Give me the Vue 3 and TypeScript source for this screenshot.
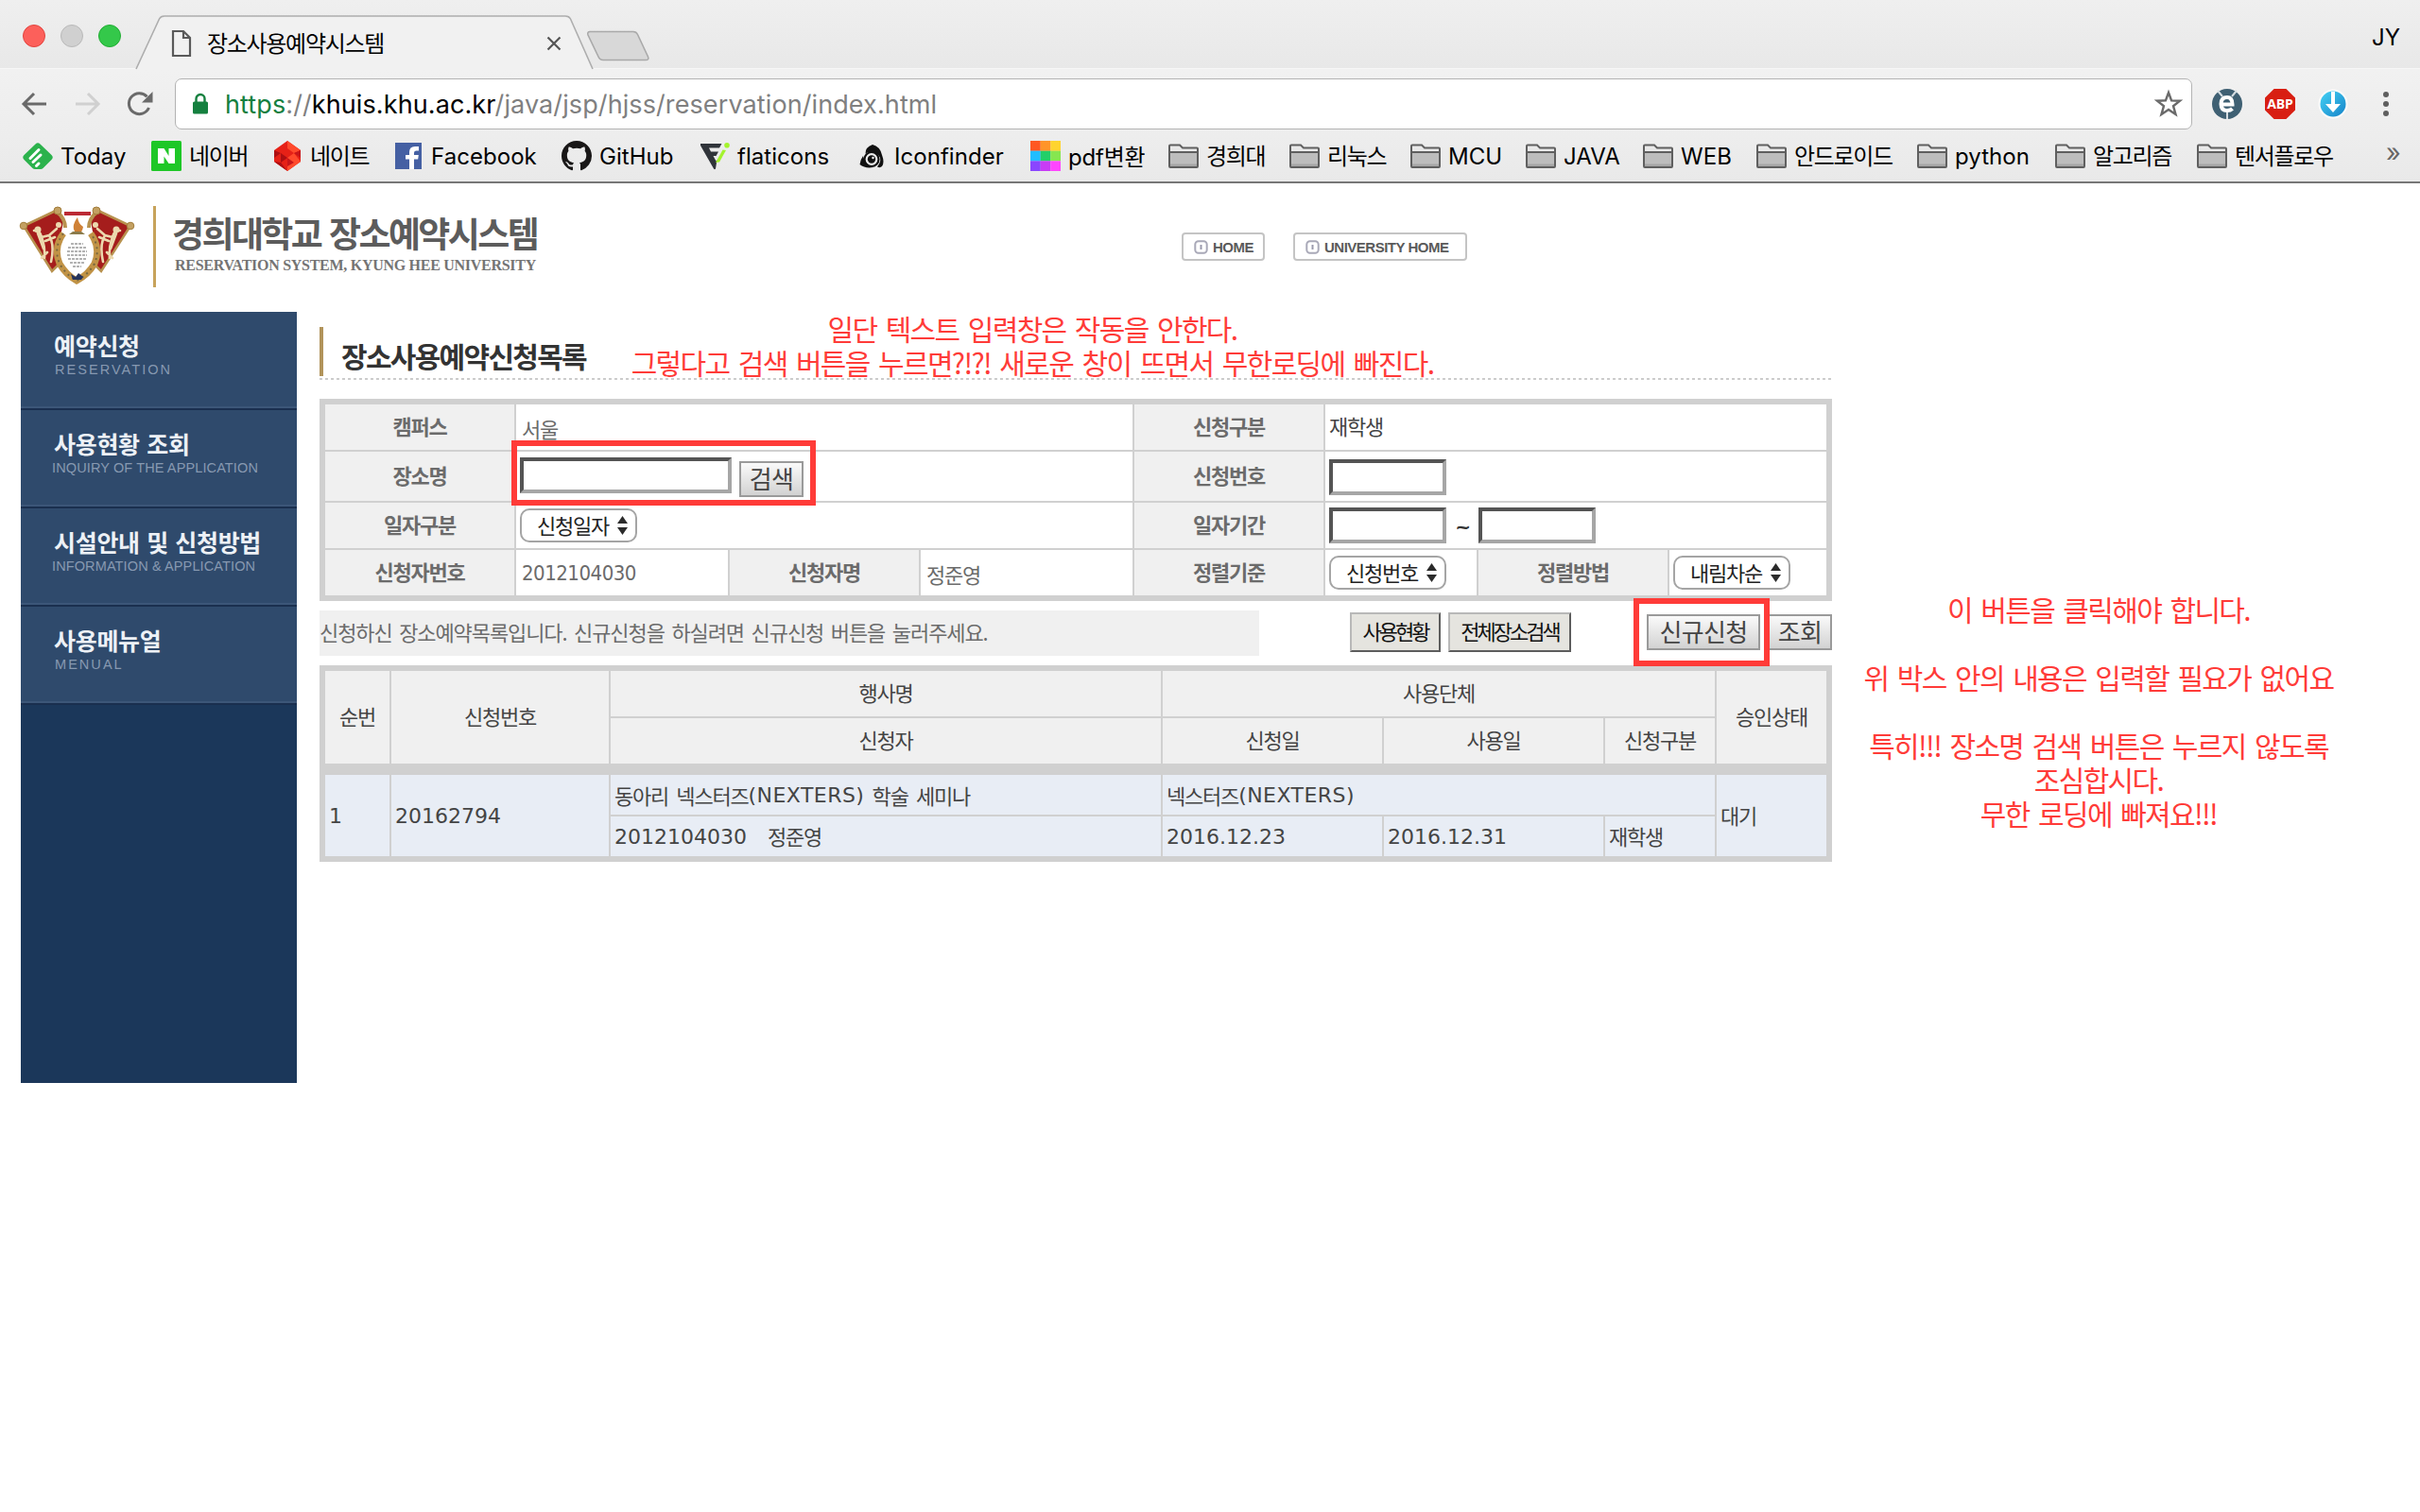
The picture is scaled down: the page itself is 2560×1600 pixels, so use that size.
<script setup lang="ts">
interface Bookmark {
  label: string
  icon: string
  width: number
  script: 'ko' | 'en' | 'mix'
}

const bookmarks: Bookmark[] = [
  { label: 'Today', icon: 'feedly', width: 136, script: 'en' },
  { label: '네이버', icon: 'naver', width: 128, script: 'ko' },
  { label: '네이트', icon: 'nate', width: 128, script: 'ko' },
  { label: 'Facebook', icon: 'facebook', width: 178, script: 'en' },
  { label: 'GitHub', icon: 'github', width: 146, script: 'en' },
  { label: 'flaticons', icon: 'flaticon', width: 166, script: 'en' },
  { label: 'Iconfinder', icon: 'iconfinder', width: 184, script: 'en' },
  { label: 'pdf변환', icon: 'pdf', width: 146, script: 'mix' },
  { label: '경희대', icon: 'folder', width: 128, script: 'ko' },
  { label: '리눅스', icon: 'folder', width: 128, script: 'ko' },
  { label: 'MCU', icon: 'folder', width: 122, script: 'en' },
  { label: 'JAVA', icon: 'folder', width: 124, script: 'en' },
  { label: 'WEB', icon: 'folder', width: 120, script: 'en' },
  { label: '안드로이드', icon: 'folder', width: 170, script: 'ko' },
  { label: 'python', icon: 'folder', width: 146, script: 'en' },
  { label: '알고리즘', icon: 'folder', width: 150, script: 'ko' },
  { label: '텐서플로우', icon: 'folder', width: 150, script: 'ko' },
]

const pdfColors: string[] = [
  '#ff5722', '#ff9429', '#ffd42e',
  '#22bdff', '#22cf68', '#86e650',
  '#8a46ff', '#c83cf5', '#ff46ff',
]

const menu = [
  { ko: '예약신청', en: 'RESERVATION', kind: 'wide' },
  { ko: '사용현황 조회', en: 'INQUIRY OF THE APPLICATION', kind: 'tight' },
  { ko: '시설안내 및 신청방법', en: 'INFORMATION & APPLICATION', kind: 'tight' },
  { ko: '사용메뉴얼', en: 'MENUAL', kind: 'wide' },
]
</script>

<template>
  <div class="screen">
    <header class="chrome">
      <div class="tabstrip">
        <div class="lights">
          <i class="light red"></i><i class="light grey"></i><i class="light green"></i>
        </div>
        <div class="tab">
          <svg class="tab-shape" width="486" height="58" viewBox="0 0 486 58">
            <path d="M0 57.5 L1 57 L25.500 4 Q27 1 31 1 H455 Q459 1 460.500 4 L484 57 L486 57.500 Z" fill="#f1f1f1" />
            <path d="M1 57 L25.500 4 Q27 1 31 1 H455 Q459 1 460.500 4 L484 57" fill="none" stroke="#adadad" stroke-width="1.6" />
          </svg>
          <div class="tab-content">
            <svg width="22" height="30" viewBox="0 0 22 30">
              <path d="M2 2 H13 L20 9 V28 H2 Z M13 2 V9 H20" fill="none" stroke="#5a5a5a" stroke-width="2.2" />
            </svg>
            <span class="tab-title">장소사용예약시스템</span>
            <svg class="tab-close" width="16" height="16" viewBox="0 0 16 16">
              <path d="M1.500 1.500 L14.500 14.500 M14.500 1.500 L1.500 14.500" stroke="#555" stroke-width="2.2" />
            </svg>
          </div>
        </div>
        <svg class="new-tab" width="68" height="34" viewBox="0 0 68 34">
          <path d="M4 1.500 H50 Q53 1.500 54.500 4.500 L65.500 28 Q67 31.500 63 31.500 H18 Q14.500 31.500 13 28 L2 5 Q1 1.500 4 1.500 Z" fill="#d8d8d8" stroke="#a9a9a9" stroke-width="1.6" />
        </svg>
        <span class="profile">JY</span>
      </div>

      <div class="toolbar">
        <svg class="nav" width="30" height="28" viewBox="0 0 30 28">
          <path d="M28 14 H4 M15 3 L4 14 L15 25" fill="none" stroke="#6a6a6a" stroke-width="3" />
        </svg>
        <svg class="nav fwd" width="30" height="28" viewBox="0 0 30 28">
          <path d="M2 14 H26 M15 3 L26 14 L15 25" fill="none" stroke="#d0d0d0" stroke-width="3" />
        </svg>
        <svg class="nav reload" width="30" height="28" viewBox="0 0 30 28">
          <path d="M24.500 18 A11 11 0 1 1 22.500 6.200" fill="none" stroke="#6a6a6a" stroke-width="3" />
          <path d="M28.500 1 V12.500 H17 Z" fill="#6a6a6a" />
        </svg>
        <div class="omnibox">
          <svg width="18" height="24" viewBox="0 0 18 24">
            <path d="M4.500 11 V6.500 A4.500 4.500 0 0 1 13.500 6.500 V11" fill="none" stroke="#15803f" stroke-width="2.4" />
            <rect x="1" y="9.500" width="16" height="13" rx="1.500" fill="#15803f" />
          </svg>
          <span class="url"><b>https</b>://<em>khuis.khu.ac.kr</em>/java/jsp/hjss/reservation/index.html</span>
          <svg class="star" width="32" height="32" viewBox="0 0 32 32">
            <path d="M16 4 L19.100 12.400 L28 12.700 L21 18.200 L23.500 27 L16 21.900 L8.500 27 L11 18.200 L4 12.700 L12.900 12.400 Z" fill="none" stroke="#6a6a6a" stroke-width="2.4" />
          </svg>
        </div>
        <svg class="ext" width="32" height="32" viewBox="0 0 32 32">
          <circle cx="16" cy="16" r="16" fill="#3f6073" />
          <path d="M6 2 L11 8 M26 2 L21 8 M16 25 V32" stroke="#d5dde2" stroke-width="2" />
          <path d="M10 16.500 H21.500 Q21.500 9 16 9 Q9.500 9 9.500 16 Q9.500 23 16 23 Q19.500 23 21.500 21" fill="none" stroke="#fff" stroke-width="4" />
        </svg>
        <div class="ext abp"><span>ABP</span></div>
        <svg class="ext" width="32" height="32" viewBox="0 0 32 32">
          <defs>
            <linearGradient id="dl" x1="0" y1="0" x2="1" y2="1">
              <stop offset="0" stop-color="#45d2f5" /><stop offset="1" stop-color="#1583c8" />
            </linearGradient>
          </defs>
          <circle cx="16" cy="16" r="15.500" fill="#fafafa" />
          <circle cx="16" cy="16" r="13.500" fill="url(#dl)" />
          <path d="M14 3 H18 V16 H24 L16 25 L8 16 H14 Z" fill="#fff" />
        </svg>
        <svg class="dots" width="8" height="28" viewBox="0 0 8 28">
          <circle cx="4" cy="4" r="3" /><circle cx="4" cy="14" r="3" /><circle cx="4" cy="24" r="3" />
        </svg>
      </div>

      <nav class="bookmarks">
        <div v-for="b in bookmarks" :key="b.label" class="bookmark" :style="{ width: b.width + 'px' }">
          <svg width="32" height="32" viewBox="0 0 32 32">
            <g v-if="b.icon === 'feedly'">
              <path d="M13.500 3.500 Q16 1 18.500 3.500 L30.500 15 Q33 17.500 30.500 20 L21.500 29 Q20.500 30 19 30 H13 Q11.500 30 10.500 29 L1.500 20 Q-1 17.500 1.500 15 Z" fill="#2bb24c" />
              <path d="M8 18.500 L17 9.500 M11 22.500 L19 15 M14.500 26.500 L17 24" stroke="#fff" stroke-width="3" stroke-linecap="round" />
            </g>
            <g v-else-if="b.icon === 'naver'">
              <rect width="32" height="32" rx="1.500" fill="#1ec727" />
              <path d="M7 8 H13.500 L18.500 16 V8 H25 V24 H18.500 L13.500 16.500 V24 H7 Z" fill="#fff" />
            </g>
            <g v-else-if="b.icon === 'nate'">
              <path d="M16 0 L30 10 V22 L16 32 L2 22 V10 Z" fill="#e62117" />
              <path d="M16 0 L30 10 L23 13 L16 8 Z M16 18 L23 13 L30 22 L16 32 Z" fill="#ff4a2c" />
              <path d="M2 10 L9 13 L2 18 Z M9 13 L16 18 L9 23 Z M2 22 L9 23 L16 32 Z" fill="#ad0f12" />
              <path d="M23 13 L30 10 V18 Z M16 18 L23 23 L16 27 Z" fill="#c8161a" />
            </g>
            <g v-else-if="b.icon === 'facebook'">
              <rect x="2" y="2" width="28" height="28" fill="#4560a3" />
              <path d="M17 30 V19.500 H13 V15 H17 V12 Q17 6 23 6 H27 V10.500 H24.500 Q22 10.500 22 12.800 V15 H26.800 L26.200 19.500 H22 V30 Z" fill="#fff" />
            </g>
            <g v-else-if="b.icon === 'github'" transform="scale(2)">
              <path d="M8 0C3.580 0 0 3.580 0 8c0 3.540 2.290 6.530 5.470 7.590.4.070.55-.17.55-.38 0-.19-.01-.82-.01-1.490-2.010.37-2.530-.49-2.690-.94-.09-.23-.48-.94-.82-1.130-.28-.15-.68-.52-.01-.53.63-.01 1.080.58 1.230.82.72 1.210 1.870.87 2.330.66.070-.52.28-.87.51-1.070-1.780-.2-3.640-.89-3.640-3.950 0-.87.31-1.590.82-2.150-.08-.2-.36-1.020.08-2.120 0 0 .67-.21 2.200.82.64-.18 1.320-.27 2-.27s1.360.09 2 .27c1.530-1.040 2.200-.82 2.200-.82.44 1.100.16 1.920.08 2.120.51.56.82 1.270.82 2.150 0 3.070-1.870 3.750-3.650 3.950.29.25.54.73.54 1.480 0 1.070-.01 1.930-.01 2.200 0 .21.15.46.55.38A8.010 8.010 0 0 0 16 8c0-4.420-3.580-8-8-8z" fill="#191717" />
            </g>
            <g v-else-if="b.icon === 'flaticon'">
              <path d="M1 3 H23.500 L21 7.500 H10 L12 11.500 H20 L17.500 16 H14.500 L17.500 21.500 L18.500 20 L17 29.500 Q16 31 15 29.500 L1 5 Z" fill="#30343a" />
              <path d="M28 10 L24.500 9.500 L17 23 L21 22.500 Z" fill="#a4f32d" />
              <circle cx="29" cy="4.800" r="2.800" fill="#a4f32d" />
            </g>
            <g v-else-if="b.icon === 'iconfinder'">
              <path d="M17 4 Q25 6 27 15 Q30 23 27 27 Q25 29 22 27.500 Q28 20 23 15 Q16 10 9.500 13.500 Q9 7 17 4 Z" fill="#111" />
              <path d="M7 16 Q4 20 3.500 25 Q9 29.500 18 28 Q9 26 7 16 Z" fill="#111" />
              <circle cx="16" cy="19.500" r="7.500" fill="none" stroke="#111" stroke-width="2.200" />
              <circle cx="16" cy="19.500" r="4.200" fill="#111" />
              <circle cx="17.500" cy="18" r="1.200" fill="#fff" />
            </g>
            <g v-else-if="b.icon === 'pdf'">
              <rect v-for="(c, i) in pdfColors" :key="c" :x="(i % 3) * 10.67" :y="Math.floor(i / 3) * 10.67" width="10.8" height="10.8" :fill="c" />
            </g>
            <g v-else>
              <path d="M1 27 V5.500 Q1 4.500 2 4.500 H12 L15 7.500 H30 Q31 7.500 31 8.500 V27 Q31 28 30 28 H2 Q1 28 1 27 Z" fill="#e9e9e9" stroke="#5f5f5f" stroke-width="2" />
              <path d="M2 12 H30 V27 H2 Z" fill="#bdbdbd" />
              <path d="M2 24.500 H30 V27 H2 Z" fill="#a6a6a6" />
              <path d="M1 12 H31" stroke="#5f5f5f" stroke-width="2" />
            </g>
          </svg>
          <span :class="b.script">{{ b.label }}</span>
        </div>
        <span class="more">»</span>
      </nav>
    </header>

    <main class="page">
      <div class="masthead">
        <svg width="124" height="84" viewBox="20 219 124 84">
          <path d="M61 223 L25 240 L55 288 L81 262 Z" fill="#a51d1c" stroke="#b8924f" stroke-width="2.500" />
          <path d="M102 223 L138 240 L107 288 L81 262 Z" fill="#a51d1c" stroke="#b8924f" stroke-width="2.500" />
          <path d="M68 230 L62 262 L66 288 L81 296 L97 288 L101 262 L95 230 Z" fill="#fff" />
          <g fill="none" stroke="#ecd9ae" stroke-width="2.600" stroke-linecap="round">
            <path d="M36 245 Q42 244 44 252 L52 250 L60 243 M44 252 Q48 262 47 274 M52 250 Q58 260 54 278 M40 248 L46 264 M48 256 L58 252 M50 268 L44 274" />
            <path d="M127 245 Q121 244 119 252 L111 250 L103 243 M119 252 Q115 262 116 274 M111 250 Q105 260 109 278 M123 248 L117 264 M115 256 L105 252 M113 268 L119 274" />
          </g>
          <g fill="#ecd9ae">
            <circle cx="40" cy="244" r="3.500" /><circle cx="123" cy="244" r="3.500" />
            <circle cx="62" cy="239" r="3" /><circle cx="101" cy="239" r="3" />
          </g>
          <path d="M67 248 Q56 263 63 280 Q70 292 81 298 Q93 292 100 280 Q107 263 96 248" fill="none" stroke="#c19346" stroke-width="7" />
          <path d="M67 248 Q56 263 63 280 Q70 292 81 298 Q93 292 100 280 Q107 263 96 248" fill="none" stroke="#77673f" stroke-width="2" stroke-dasharray="2 4" />
          <ellipse cx="81.500" cy="270" rx="13.500" ry="19.500" fill="#fff" />
          <path d="M75 259 H88 M72 263 H91 M71 267 H92 M71 271 H92 M72 275 H91 M74 279 H89 M77 283 H86" stroke="#9b9b9b" stroke-width="1.500" stroke-dasharray="3 1" />
          <path d="M68 227 H96" stroke="#bb2a35" stroke-width="4" />
          <path d="M60 225 Q69 232 69 242 M103 225 Q94 232 94 242" fill="none" stroke="#b8924f" stroke-width="4" />
          <g fill="#c3a062" stroke="#a27c3a" stroke-width="1">
            <circle cx="61" cy="224" r="4" /><circle cx="102" cy="224" r="4" />
            <circle cx="25" cy="240" r="3.800" /><circle cx="138" cy="240" r="3.800" />
          </g>
          <path d="M81 248 Q74 242 82 231 Q83 238 88 241 Q87 247 83 248 Z" fill="#cf8136" />
          <path d="M73 249 H90 L86 246 H77 Z" fill="#8b7b4b" />
          <path d="M75 291 L80 294 L83 290 L88 294 L86 297 H77 Z" fill="#26345c" />
        </svg>
        <i class="rule"></i>
        <div class="brand">
          <strong>경희대학교 장소예약시스템</strong>
          <span>RESERVATION SYSTEM, KYUNG HEE UNIVERSITY</span>
        </div>
        <div class="links">
          <a v-for="l in ['HOME', 'UNIVERSITY HOME']" :key="l" class="link">
            <svg width="15" height="15" viewBox="0 0 15 15">
              <rect x="1.300" y="1.300" width="12.400" height="12.400" rx="3.500" fill="none" stroke="#a9a9b8" stroke-width="2" />
              <path d="M7.500 5 V10" stroke="#9a9aac" stroke-width="2" />
            </svg>
            <span>{{ l }}</span>
          </a>
        </div>
      </div>

      <div class="body">
        <aside class="sidebar">
          <div v-for="m in menu" :key="m.en" class="menu-item" :class="m.kind">
            <strong>{{ m.ko }}</strong>
            <span>{{ m.en }}</span>
          </div>
        </aside>

        <section class="content">
          <h1>장소사용예약신청목록</h1>

          <div class="search">
            <div class="th">캠퍼스</div>
            <div class="td s3 low">서울</div>
            <div class="th">신청구분</div>
            <div class="td s3 dark">재학생</div>

            <div class="th">장소명</div>
            <div class="td s3 place"><input class="wide-input" /><button class="img-btn find">검색</button></div>
            <div class="th">신청번호</div>
            <div class="td s3 number"><input /></div>

            <div class="th">일자구분</div>
            <div class="td s3 field"><span class="select">신청일자<svg width="11" height="20" viewBox="0 0 11 20"><path d="M5.500 0 L11 8 H0 Z M5.500 20 L0 12 H11 Z" /></svg></span></div>
            <div class="th">일자기간</div>
            <div class="td s3 field"><input /><span class="tilde">~</span><input /></div>

            <div class="th">신청자번호</div>
            <div class="td low"><span class="tahoma">2012104030</span></div>
            <div class="th">신청자명</div>
            <div class="td low">정준영</div>
            <div class="th">정렬기준</div>
            <div class="td field"><span class="select">신청번호<svg width="11" height="20" viewBox="0 0 11 20"><path d="M5.500 0 L11 8 H0 Z M5.500 20 L0 12 H11 Z" /></svg></span></div>
            <div class="th">정렬방법</div>
            <div class="td field"><span class="select">내림차순<svg width="11" height="20" viewBox="0 0 11 20"><path d="M5.500 0 L11 8 H0 Z M5.500 20 L0 12 H11 Z" /></svg></span></div>
          </div>

          <div class="actions">
            <p class="notice">신청하신 장소예약목록입니다. 신규신청을 하실려면 신규신청 버튼을 눌러주세요.</p>
            <button class="plain-btn b1">사용현황</button>
            <button class="plain-btn b2">전체장소검색</button>
            <button class="img-btn new">신규신청</button>
            <button class="img-btn query">조회</button>
          </div>

          <div class="list">
            <div class="grid head">
              <div class="tall">순번</div>
              <div class="tall">신청번호</div>
              <div>행사명</div>
              <div class="group">사용단체</div>
              <div class="tall">승인상태</div>
              <div>신청자</div>
              <div>신청일</div>
              <div>사용일</div>
              <div>신청구분</div>
            </div>
            <div class="grid row">
              <div class="tall num"><span class="verdana">1</span></div>
              <div class="tall num"><span class="verdana">20162794</span></div>
              <div>동아리 넥스터즈<span class="verdana caps">(NEXTERS)</span>&nbsp;학술 세미나</div>
              <div class="group">넥스터즈<span class="verdana caps">(NEXTERS)</span></div>
              <div class="tall up">대기</div>
              <div class="up"><span class="verdana">2012104030</span><span class="name">정준영</span></div>
              <div class="num"><span class="verdana">2016.12.23</span></div>
              <div class="num"><span class="verdana">2016.12.31</span></div>
              <div class="up">재학생</div>
            </div>
          </div>
        </section>
      </div>
    </main>

    <div class="note note-top">일단 텍스트 입력창은 작동을 안한다.<br />그렇다고 검색 버튼을 누르면?!?! 새로운 창이 뜨면서 무한로딩에 빠진다.</div>
    <div class="note note-right">이 버튼을 클릭해야 합니다.<br /><br />위 박스 안의 내용은 입력할 필요가 없어요<br /><br />특히!!! 장소명 검색 버튼은 누르지 않도록<br />조심합시다.<br />무한 로딩에 빠져요!!!</div>
    <i class="mark mark-search"></i>
    <i class="mark mark-new"></i>
  </div>
</template>

<style>
body {
  margin: 0;
  background: #fff;
}
</style>

<style scoped>
* {
  box-sizing: border-box;
}
.screen {
  position: relative;
  width: 2560px;
  height: 1600px;
  overflow: hidden;
  background: #fff;
  font-family: 'Noto Sans CJK KR', sans-serif;
  font-size: 22px;
  letter-spacing: -1.2px;
  word-spacing: 3px;
  white-space: nowrap;
}
.chrome {
  height: 194px;
  border-bottom: 2px solid #777;
  font-family: Inter, 'Noto Sans CJK KR', sans-serif;
  color: #000;
}
.tabstrip {
  height: 73px;
  display: flex;
  background: linear-gradient(#efefef, #e8e8e8);
  border-bottom: 1px solid #f7f7f7;
}
.lights {
  display: flex;
  gap: 16px;
  padding: 26px 0 0 24px;
  width: 143px;
}
.light {
  width: 24px;
  height: 24px;
  border-radius: 50%;
  border: 1px solid;
}
.light.red { background: #fc605b; border-color: #e2443f; }
.light.grey { background: #d0d0d0; border-color: #b9b9b9; }
.light.green { background: #34c84a; border-color: #22ad34; }
.tab {
  width: 486px;
  height: 58px;
  margin-top: 16px;
  display: grid;
}
.tab-shape, .tab-content {
  grid-area: 1 / 1;
}
.tab-content {
  display: flex;
  align-items: center;
  padding: 2px 35px 0 38px;
}
.tab-title {
  margin-left: 16px;
  padding-bottom: 4px;
  flex: 1;
  font-family: 'Noto Sans CJK KR', sans-serif;
  font-size: 24px;
  letter-spacing: -1.300px;
}
.new-tab {
  margin: 32px 0 0 -9px;
}
.profile {
  margin: 25px 21px 0 auto;
  font-size: 24px;
  letter-spacing: 0;
}
.toolbar {
  height: 72px;
  padding: 10px 0 0 21px;
  display: flex;
  align-items: flex-start;
  background: linear-gradient(#f1f1f1, #ededed);
}
.nav {
  margin-top: 13px;
}
.fwd {
  margin-left: 27px;
}
.reload {
  margin-left: 25px;
}
.omnibox {
  width: 2134px;
  height: 54px;
  margin: 0 21px 0 22px;
  padding: 0 8px 0 17px;
  display: flex;
  align-items: center;
  background: #fff;
  border: 1.500px solid #b3b3b3;
  border-radius: 7px;
}
.url {
  margin-left: 17px;
  flex: 1;
  font-size: 27px;
  letter-spacing: 0.100px;
  color: #808080;
}
.url b {
  font-weight: 400;
  color: #15803f;
}
.url em {
  font-style: normal;
  color: #000;
}
.ext {
  margin: 11px 24px 0 0;
}
.abp {
  width: 32px;
  height: 32px;
  display: flex;
  align-items: center;
  justify-content: center;
  background: #d81e12;
  clip-path: polygon(30% 0, 70% 0, 100% 30%, 100% 70%, 70% 100%, 30% 100%, 0 70%, 0 30%);
  font: 700 14px/32px 'Open Sans', sans-serif;
  color: #fff;
  letter-spacing: -0.200px;
}
.dots {
  margin: 13px 0 0 12px;
  fill: #5f5f5f;
}
.bookmarks {
  height: 47px;
  padding-left: 24px;
  display: flex;
  background: linear-gradient(#ededed, #e9e9e9);
}
.bookmark {
  flex: none;
  height: 40px;
  display: flex;
  align-items: center;
  gap: 8px;
  font-size: 24px;
}
.ko {
  padding-bottom: 3px;
  letter-spacing: -1.300px;
}
.en {
  letter-spacing: 0.050px;
}
.mix {
  padding-bottom: 2px;
  letter-spacing: -0.200px;
}
.more {
  margin-left: 50px;
  font-size: 27px;
  color: #666;
}

.page {
  padding-left: 20px;
}
.masthead {
  height: 136px;
  padding-top: 24px;
  display: flex;
  align-items: flex-start;
}
.rule {
  width: 3px;
  height: 86px;
  margin-left: 18px;
  background: #c7a35b;
}
.brand {
  width: 387px;
  margin: 3px 0 0 17px;
  display: flex;
  flex-direction: column;
  color: #5c5c5c;
}
.brand strong {
  font-size: 37px;
  line-height: 50px;
  letter-spacing: -2.600px;
  word-spacing: 3px;
}
.brand span {
  margin: 2px 0 0 3px;
  font: 700 16px/16px 'Liberation Serif', serif;
  letter-spacing: -0.280px;
  word-spacing: 0;
  color: #747474;
}
.links {
  margin: 28px 0 0 681px;
  display: flex;
  gap: 30px;
}
.link {
  width: 88px;
  height: 30px;
  padding-left: 11px;
  display: flex;
  align-items: center;
  gap: 5px;
  border: 2px solid #c4c4c4;
  border-radius: 4px;
  font: 700 15px 'Liberation Sans', sans-serif;
  letter-spacing: -0.500px;
  word-spacing: 0;
  color: #5a5a5a;
}
.link + .link {
  width: 184px;
}
.body {
  display: flex;
  align-items: flex-start;
  padding-left: 2px;
}
.sidebar {
  width: 292px;
  height: 816px;
  background: #1b375a;
}
.menu-item {
  height: 104px;
  padding: 17px 0 0 35px;
  display: flex;
  flex-direction: column;
  background: #2f4a6c;
  border-bottom: 2px solid #1a2f4f;
  box-shadow: inset 0 -2px #3c5678;
}
.menu-item strong {
  font-size: 25px;
  line-height: 36px;
  letter-spacing: -0.300px;
  word-spacing: 2px;
  color: #edf1f6;
}
.menu-item span {
  font: 14.500px/16px 'Liberation Sans', sans-serif;
  color: #8799b1;
  word-spacing: 0;
}
.wide span {
  letter-spacing: 2.050px;
  margin: 0 0 0 1px;
}
.tight span {
  letter-spacing: 0.120px;
  margin: 0 0 0 -2px;
}
.content {
  width: 1600px;
  margin: 16px 0 0 24px;
}
h1 {
  height: 56px;
  margin: 0;
  padding: 8px 0 0 23px;
  background:
    linear-gradient(#b1935a, #b1935a) 0 0 / 4px 52px no-repeat,
    repeating-linear-gradient(90deg, #ccc 0 3px, transparent 3px 6px) 0 54px / 100% 2px no-repeat;
  font-size: 30px;
  line-height: 44px;
  letter-spacing: -1.700px;
  color: #333;
}
.search {
  margin-top: 20px;
  border: 6px solid #d0d0d0;
  background: #d0d0d0;
  display: grid;
  grid-template-columns: 200px 224px 200px 224px 200px 160px 200px 166px;
  grid-template-rows: 48px 52px 48px 48px;
  gap: 2px;
  color: #6b6b6b;
}
.th, .td {
  display: flex;
  align-items: center;
  padding-bottom: 4px;
}
.th {
  justify-content: center;
  background: #f0f0f0;
  font-weight: 700;
}
.td {
  padding-left: 4px;
  background: #fff;
}
.low {
  padding: 1px 0 0 6px;
}
.s3 {
  grid-column: span 3;
}
.dark {
  color: #444;
}
.field {
  padding-bottom: 0;
}
input {
  width: 124px;
  height: 38px;
  padding: 0;
  background: #fff;
  border: 4px solid;
  border-color: #545454 #a6a6a6 #a6a6a6 #545454;
}
.place, .number {
  align-items: flex-start;
  padding-top: 6px;
}
.number {
  padding-top: 8px;
}
.wide-input {
  width: 224px;
}
button {
  padding: 0;
  font-family: inherit;
  word-spacing: 0;
}
.img-btn {
  height: 38px;
  border: 2px solid #9a9a9a;
  background: linear-gradient(#fafafa, #d2d2d2);
  color: #444;
  font-size: 26px;
  line-height: 30px;
  padding-bottom: 2px;
  letter-spacing: -0.700px;
}
.find {
  width: 68px;
  margin: 4px 0 0 8px;
}
.tilde {
  width: 34px;
  padding-top: 2px;
  text-align: center;
  color: #333;
  font-weight: 700;
  font-size: 20px;
  font-family: 'DejaVu Sans', sans-serif;
}
.tahoma {
  font-family: 'DejaVu Sans Condensed', 'DejaVu Sans', sans-serif;
  font-stretch: condensed;
  font-size: 22px;
  letter-spacing: -0.500px;
}
.select {
  width: 124px;
  height: 36px;
  padding: 0 8px 2px 16px;
  display: flex;
  align-items: center;
  justify-content: space-between;
  border: 2px solid #a5a5a5;
  border-radius: 10px;
  background: #fff;
  color: #222;
}
.select svg {
  margin-top: 1px;
  fill: #2b2b2b;
}
.actions {
  margin-top: 10px;
  height: 48px;
  display: flex;
  align-items: flex-start;
}
.notice {
  width: 994px;
  height: 48px;
  margin: 0;
  line-height: 44px;
  letter-spacing: -1.100px;
  word-spacing: 3.800px;
  background: #f0f0f0;
  color: #6b6b6b;
}
.plain-btn {
  height: 42px;
  margin-top: 2px;
  border: 2px solid;
  border-color: #b8b8b8 #5d5d5d #5d5d5d #b8b8b8;
  background: #e5e4df;
  color: #111;
  font-size: 22px;
  line-height: 30px;
  padding-bottom: 4px;
  letter-spacing: -3px;
}
.b1 {
  width: 96px;
  margin-left: 96px;
}
.b2 {
  width: 130px;
  margin-left: 8px;
}
.new {
  width: 120px;
  margin: 4px 0 0 80px;
}
.query {
  width: 68px;
  margin: 4px 0 0 8px;
}
.list {
  margin-top: 10px;
  border: 6px solid #d0d0d0;
  background: #d0d0d0;
  display: flex;
  flex-direction: column;
  gap: 12px;
  color: #444;
}
.grid {
  display: grid;
  grid-template-columns: 68px 230px 582px 232px 232px 116px 116px;
  gap: 2px;
}
.grid > div {
  display: flex;
  align-items: center;
}
.head {
  grid-template-rows: 48px 48px;
}
.head > div {
  justify-content: center;
  padding-bottom: 4px;
  background: #f0f0f0;
}
.row {
  grid-template-rows: 42px 42px;
  word-spacing: 4.500px;
}
.row > div {
  padding: 0 0 0 4px;
  background: #e8edf5;
}
.row > .up {
  padding-bottom: 2px;
}
.row > .num {
  padding-top: 1px;
}
.up .verdana {
  padding-top: 3px;
}
.tall {
  grid-row: span 2;
}
.group {
  grid-column: span 3;
}
.verdana {
  font-family: 'DejaVu Sans', sans-serif;
  font-size: 22px;
  letter-spacing: 0;
}
.caps {
  letter-spacing: 0.450px;
}
.name {
  margin-left: 22px;
}

.note {
  position: absolute;
  font-size: 30px;
  line-height: 36px;
  letter-spacing: -1.650px;
  word-spacing: 4.200px;
  text-align: center;
  color: #ff3b38;
}
.note-top {
  left: 592px;
  top: 329px;
  width: 1000px;
}
.note-right {
  left: 1920px;
  top: 626px;
  width: 600px;
}
.mark {
  position: absolute;
  border: 6px solid #ff3b38;
}
.mark-search {
  left: 541px;
  top: 466px;
  width: 322px;
  height: 69px;
}
.mark-new {
  left: 1728px;
  top: 633px;
  width: 144px;
  height: 72px;
}
</style>
